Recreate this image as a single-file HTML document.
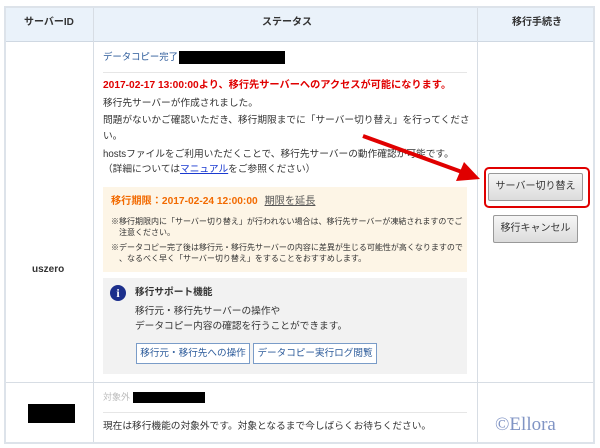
<!DOCTYPE html>
<html><head><meta charset="utf-8"><style>
*{margin:0;padding:0;box-sizing:border-box}
body{width:600px;height:448px;background:#fff;font-family:"Liberation Sans","Noto Sans CJK JP",sans-serif;font-size:9.7px;color:#333;position:relative;overflow:hidden}
.a{position:absolute;white-space:nowrap;line-height:14px}
.blk{position:absolute;background:#000}
.btn{position:absolute;border:1px solid #999;border-radius:2px;background:linear-gradient(#f6f6f6,#dcdcdc);text-align:center;font-size:10px;color:#333;white-space:nowrap}
.lb{position:absolute;border:1px solid #7a9cc8;background:#fff;color:#2b5a9a;font-size:9.6px;text-align:center;line-height:19px;white-space:nowrap}
</style></head><body>
<div style="position:absolute;left:4px;top:6px;width:591px;height:438px;border:2px solid #dde3ea"></div>
<div style="position:absolute;left:6px;top:8px;width:587px;height:34px;background:#eaf2fa;border-bottom:1px solid #cfd8e2"></div>
<div style="position:absolute;left:93px;top:8px;width:1px;height:434px;background:#d7dde4"></div>
<div style="position:absolute;left:477px;top:8px;width:1px;height:434px;background:#d7dde4"></div>
<div style="position:absolute;left:6px;top:382px;width:587px;height:1px;background:#d7dde4"></div>
<div class="a" style="left:24px;top:16px;font-weight:bold;font-size:10px">サーバーID</div>
<div class="a" style="left:262px;top:16px;font-weight:bold;font-size:10px">ステータス</div>
<div class="a" style="left:512px;top:16px;font-weight:bold;font-size:10px">移行手続き</div>
<div class="a" style="left:32px;top:263px;font-weight:bold;font-size:10px">uszero</div>
<div class="blk" style="left:28px;top:404px;width:47px;height:19px"></div>

<div class="a" style="left:103px;top:50px;color:#2b5a9a;font-size:9.4px">データコピー完了</div>
<div class="blk" style="left:179px;top:51px;width:106px;height:13px"></div>
<div style="position:absolute;left:103px;top:72px;width:364px;height:1px;background:#e6e6e6"></div>
<div class="a" style="left:103px;top:79px;color:#e00000;font-weight:bold;font-size:10.2px">2017-02-17 13:00:00より、移行先サーバーへのアクセスが可能になります。</div>
<div class="a" style="left:103px;top:97px">移行先サーバーが作成されました。</div>
<div class="a" style="left:103px;top:114px">問題がないかご確認いただき、移行期限までに「サーバー切り替え」を行ってくださ</div>
<div class="a" style="left:103px;top:130px">い。</div>
<div class="a" style="left:103px;top:148px">hostsファイルをご利用いただくことで、移行先サーバーの動作確認が可能です。</div>
<div class="a" style="left:103px;top:163px">（詳細については<span style="color:#1a3ad0;text-decoration:underline">マニュアル</span>をご参照ください）</div>

<div style="position:absolute;left:103px;top:187px;width:364px;height:85px;background:#fdf5e6"></div>
<div class="a" style="left:111px;top:195px;color:#f26a00;font-weight:bold;font-size:10.2px">移行期限：2017-02-24 12:00:00 <span style="color:#555;font-weight:normal;text-decoration:underline;margin-left:4px">期限を延長</span></div>
<div class="a" style="left:111px;top:216px;font-size:8px;line-height:11px">※移行期限内に「サーバー切り替え」が行われない場合は、移行先サーバーが凍結されますのでご<br>　注意ください。</div>
<div class="a" style="left:111px;top:242px;font-size:8px;line-height:11px">※データコピー完了後は移行元・移行先サーバーの内容に差異が生じる可能性が高くなりますので<br>　、なるべく早く「サーバー切り替え」をすることをおすすめします。</div>

<div style="position:absolute;left:103px;top:278px;width:364px;height:96px;background:#f2f2f2"></div>
<div style="position:absolute;left:110px;top:285px;width:16px;height:16px;border-radius:50%;background:#1c2f8c;color:#fff;font:bold 12px 'Liberation Serif',serif;text-align:center;line-height:16px">i</div>
<div class="a" style="left:135px;top:286px;font-weight:bold">移行サポート機能</div>
<div class="a" style="left:135px;top:305px">移行元・移行先サーバーの操作や</div>
<div class="a" style="left:135px;top:320px">データコピー内容の確認を行うことができます。</div>
<div class="lb" style="left:136px;top:343px;width:114px;height:21px">移行元・移行先への操作</div>
<div class="lb" style="left:253px;top:343px;width:124px;height:21px">データコピー実行ログ閲覧</div>

<div class="a" style="left:103px;top:390px;color:#bbb;font-size:9px">対象外</div>
<div class="blk" style="left:133px;top:392px;width:72px;height:11px"></div>
<div style="position:absolute;left:103px;top:412px;width:364px;height:1px;background:#e6e6e6"></div>
<div class="a" style="left:103px;top:420px">現在は移行機能の対象外です。対象となるまで今しばらくお待ちください。</div>

<div style="position:absolute;left:484px;top:167px;width:106px;height:41px;border:2px solid #e00000;border-radius:5px"></div>
<div class="btn" style="left:488px;top:173px;width:95px;height:28px;line-height:26px">サーバー切り替え</div>
<div class="btn" style="left:493px;top:215px;width:85px;height:28px;line-height:26px">移行キャンセル</div>
<div class="a" style="left:495px;top:414px;font:19px 'Liberation Serif',serif;color:#8094c4;line-height:22px">©Ellora</div>

<svg style="position:absolute;left:0;top:0" width="600" height="448">
<line x1="363" y1="136" x2="462" y2="172" stroke="#e00000" stroke-width="4"/>
<polygon points="480,179 456,181 464,162" fill="#e00000"/>
</svg>
</body></html>
